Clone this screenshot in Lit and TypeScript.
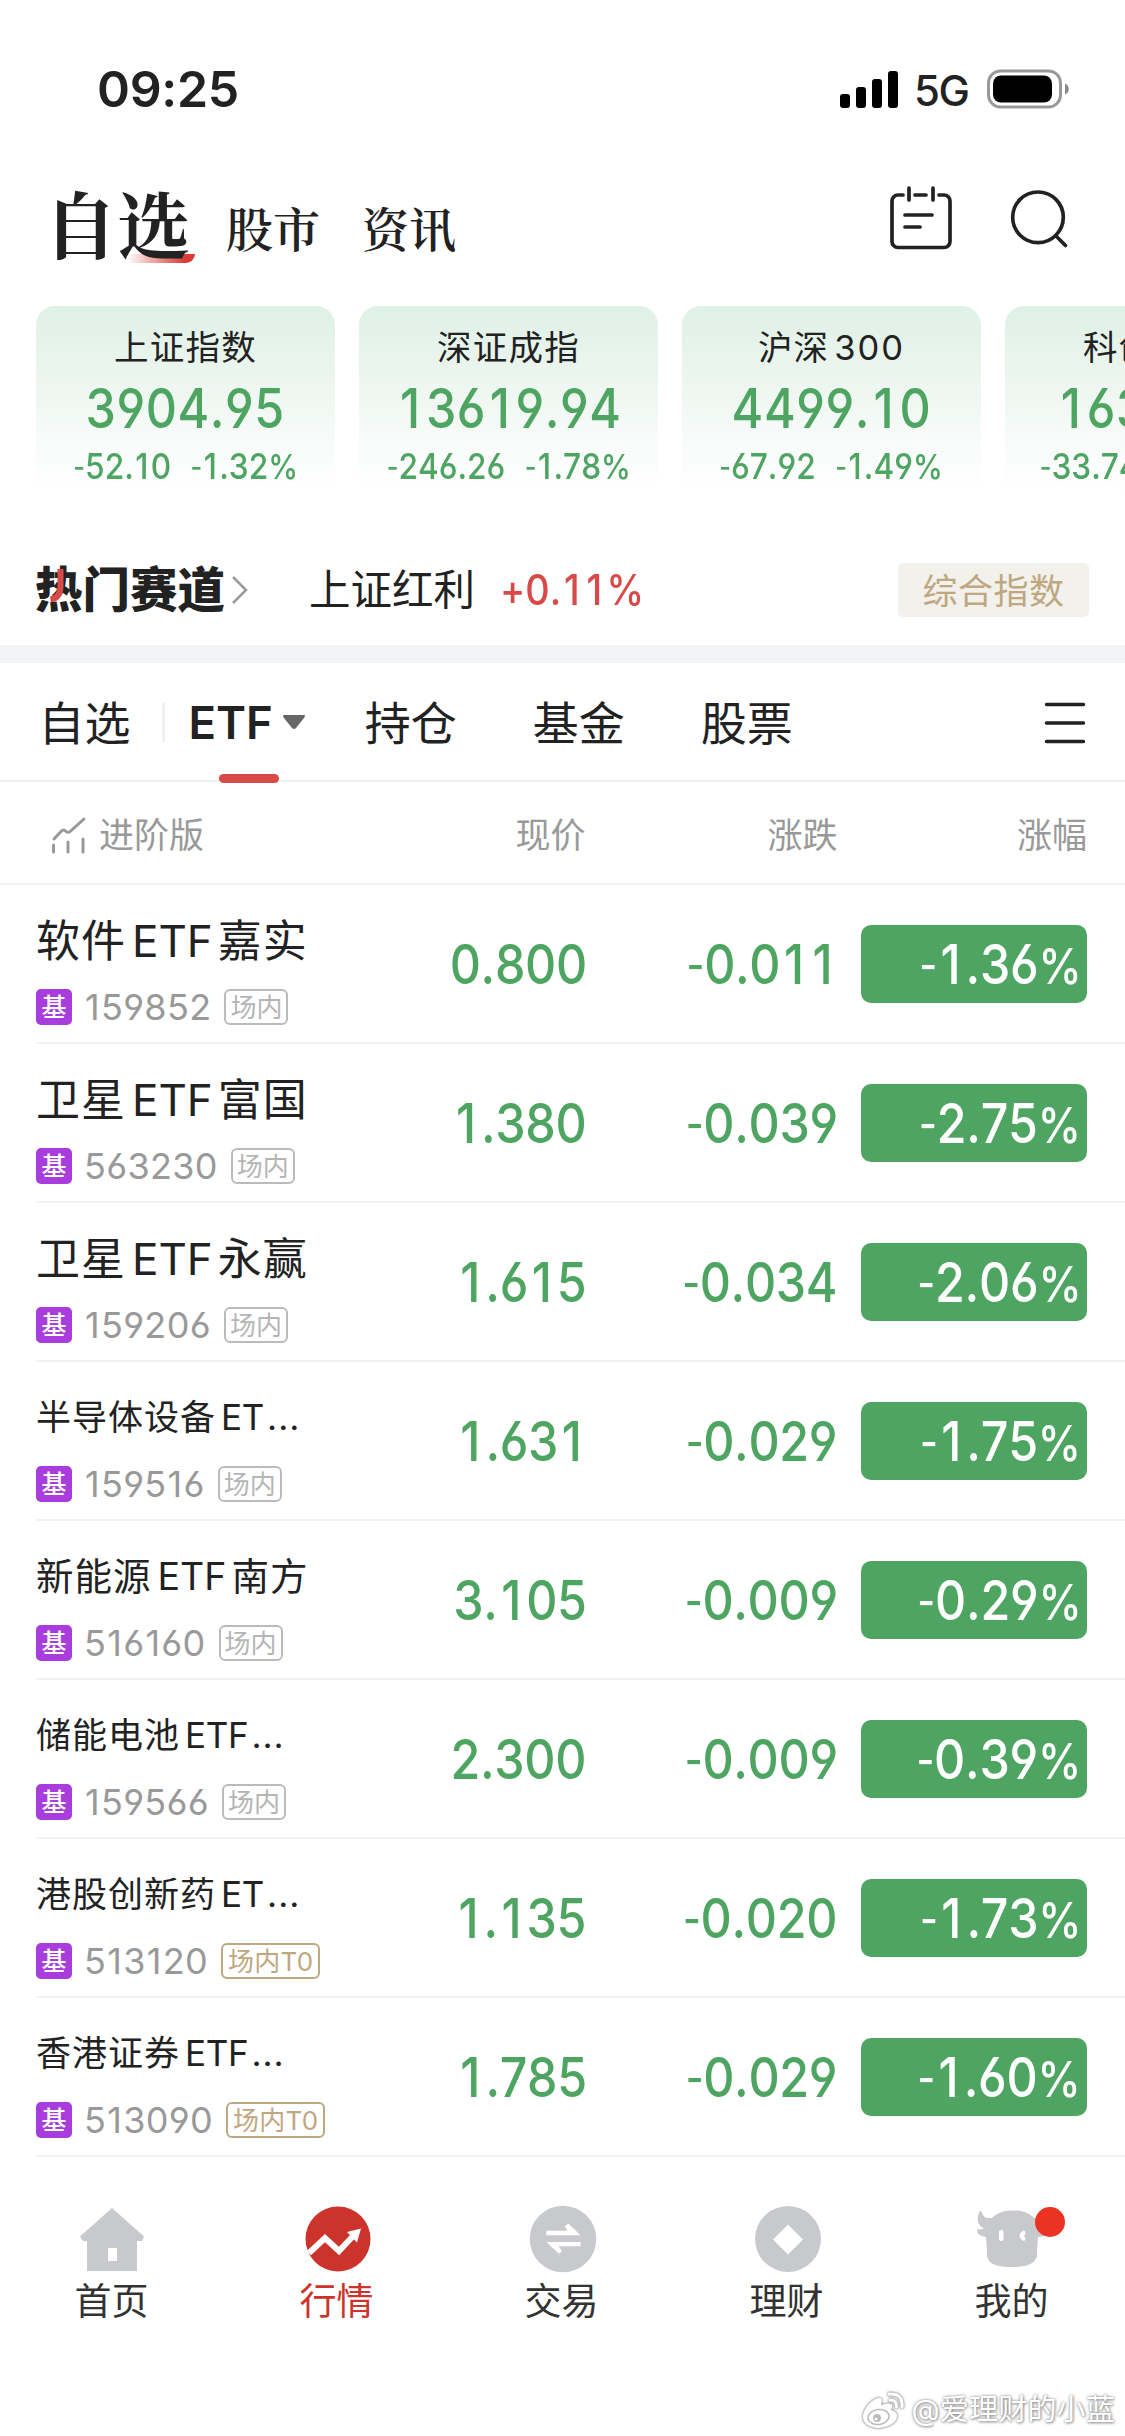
import { LitElement, html, svg, css, nothing } from "lit";
import { customElement, property } from "lit/decorators.js";

interface IndexCard { name: string; value: string; change: string; pct: string; }
interface Fund { name: string; size: string; code: string; t0?: boolean; price: string; change: string; pct: string; }

const INDICES: IndexCard[] = [
  { name: "上证指数", value: "3904.95", change: "-52.10", pct: "-1.32%" },
  { name: "深证成指", value: "13619.94", change: "-246.26", pct: "-1.78%" },
  { name: "沪深300", value: "4499.10", change: "-67.92", pct: "-1.49%" },
  { name: "科创综指", value: "1635.96", change: "-33.74", pct: "-2.02%" },
];

const FUNDS: Fund[] = [
  { name: "软件ETF嘉实", size: "lg", code: "159852", price: "0.800", change: "-0.011", pct: "-1.36%" },
  { name: "卫星ETF富国", size: "lg", code: "563230", price: "1.380", change: "-0.039", pct: "-2.75%" },
  { name: "卫星ETF永赢", size: "lg", code: "159206", price: "1.615", change: "-0.034", pct: "-2.06%" },
  { name: "半导体设备ET...", size: "sm", code: "159516", price: "1.631", change: "-0.029", pct: "-1.75%" },
  { name: "新能源ETF南方", size: "md", code: "516160", price: "3.105", change: "-0.009", pct: "-0.29%" },
  { name: "储能电池ETF...", size: "sm", code: "159566", price: "2.300", change: "-0.009", pct: "-0.39%" },
  { name: "港股创新药ET...", size: "sm", code: "513120", t0: true, price: "1.135", change: "-0.020", pct: "-1.73%" },
  { name: "香港证券ETF...", size: "sm", code: "513090", t0: true, price: "1.785", change: "-0.029", pct: "-1.60%" },
];

const shared = css`
  * { box-sizing: border-box; }
  .num {
    display: inline-block;
    white-space: nowrap;
    font-family: Inter, Roboto, sans-serif;
    font-feature-settings: "cv03", "cv04", "calt" 0;
    font-kerning: none;
    font-weight: 500;
    transform: scaleX(0.88);
  }
  .right { transform-origin: 100% 50%; }
  .left { transform-origin: 0 50%; }
  .pc { font-size: 0.9em; }
  .one { margin: 0 0.11em 0 0.075em; }
  .minus { font-size: 0.8em; line-height: 0; vertical-align: 0.06em; }
  svg { display: block; overflow: visible; }
`;

/* Splits a name so that Latin runs can carry their own side spacing. */
const mixed = (s: string) =>
  s.split(/([A-Za-z0-9]+)/).filter(Boolean).map((p) =>
    /^[A-Za-z0-9]/.test(p) ? html`<span class="latin">${p}</span>` : p);

const CLASSES: Record<string, string> = { "1": "one", "-": "minus", "%": "pc" };

/* Gives the narrow "1", the minus and the percent sign their own metrics. */
const figures = (s: string) =>
  s.split(/([1%-])/).filter(Boolean).map((p) =>
    CLASSES[p] ? html`<span class="${CLASSES[p]}">${p}</span>` : p);

@customElement("status-bar")
class StatusBar extends LitElement {
  static styles = [shared, css`
    :host { display: flex; align-items: center; justify-content: space-between; height: 178px; padding: 0 56px 0 97px; }
    .time { font: 600 50px/60px Inter, sans-serif; letter-spacing: -0.3px; }
    .side { display: flex; align-items: center; gap: 18px; }
    .net { font: 500 42px/50px Inter, sans-serif; width: 53px; letter-spacing: -1.5px; padding-top: 3px; margin: 0 2px 0 -2px; }
  `];
  render() {
    return html`
      <span class="time">09:25</span>
      <span class="side">
        <svg width="58" height="37" fill="#000">
          <rect x="0" y="23" width="10" height="14" rx="3"/><rect x="16" y="16" width="10" height="21" rx="3"/>
          <rect x="32" y="8" width="10" height="29" rx="3"/><rect x="48" y="0" width="10" height="37" rx="3"/>
        </svg>
        <span class="net">5G</span>
        <svg width="82" height="40">
          <rect x="1.5" y="2" width="72" height="36" rx="12" fill="none" stroke="#999" stroke-width="3"/>
          <rect x="6" y="6.500" width="59" height="27" rx="8"/>
          <path d="M78 14.500c5 2 5 9 0 11z" fill="#888"/>
        </svg>
      </span>`;
  }
}

@customElement("title-bar")
class TitleBar extends LitElement {
  static styles = [shared, css`
    :host { display: flex; align-items: center; height: 128px; padding: 0 58px 41px 44px; color: #222;
      font-family: "Noto Serif CJK SC", "Source Han Serif SC", "Noto Sans CJK SC", serif; }
    .main { position: relative; font-size: 73px; line-height: 82px; font-weight: 700; }
    .word { position: relative; }
    .swash { position: absolute; left: 83px; bottom: 0; width: 68px; height: 9px;
      background: linear-gradient(90deg, rgba(216,60,52,0), #d83c34 85%); border-radius: 0 0 9px 0; }
    .tab { font-size: 47px; line-height: 60px; font-weight: 600; padding-top: 10px; margin-left: 42px; }
    .first { margin-left: 36px; }
    .icons { margin-left: auto; display: flex; gap: 58px; align-self: flex-start; padding-top: 8px; }
  `];
  render() {
    return html`
      <div class="main"><span class="swash"></span><span class="word">自选</span></div>
      <div class="tab first">股市</div>
      <div class="tab">资讯</div>
      <div class="icons">
        <svg width="62" height="64" fill="none" stroke="#222" stroke-width="3.700" stroke-linecap="round">
          <path d="M13 9H8a6 6 0 0 0-6 6v40.500a6 6 0 0 0 6 6h46a6 6 0 0 0 6-6V15a6 6 0 0 0-6-6h-5M25 9h11M19 2v12M43 2v12M15 29h27M15 41h15"/>
        </svg>
        <svg width="57" height="64" fill="none" stroke="#222" stroke-width="3.700" stroke-linecap="round">
          <circle cx="28" cy="31.300" r="25.300"/><path d="M46.500 50.500l9 9"/>
        </svg>
      </div>`;
  }
}

@customElement("index-card")
class IndexCardEl extends LitElement {
  @property({ attribute: false }) data!: IndexCard;
  static styles = [shared, css`
    :host { flex: none; display: flex; flex-direction: column; align-items: center; width: 299px; height: 201px; padding-top: 19px;
      border-radius: 19px; background: linear-gradient(#dff1e6, #ebf5ee 33%, #f7fbf9 66%, #fff 92%); color: #4ea562; }
    .name { font: 400 34.500px/46px Inter, "Noto Sans CJK SC", sans-serif; color: #222; letter-spacing: 1.2px; white-space: nowrap; }
    .name .latin { margin-left: 5px; letter-spacing: 2px; }
    .value { font-size: 55px; line-height: 60px; margin-top: 7px; letter-spacing: 0.6px; }
    .sub { font-size: 36px; line-height: 46px; margin-top: 5px; }
    .gap { display: inline-block; width: 22px; }
    .pc { font-size: 0.95em; }
    .sub .one { margin: 0 0.07em 0 0.05em; }
  `];
  render() {
    const d = this.data;
    return html`
      <div class="name">${mixed(d.name)}</div>
      <div class="num value">${figures(d.value)}</div>
      <div class="num sub">${figures(d.change)}<span class="gap"></span>${figures(d.pct)}</div>`;
  }
}

@customElement("fund-row")
class FundRow extends LitElement {
  @property({ attribute: false }) data!: Fund;
  static styles = [shared, css`
    :host { display: grid; grid-template-columns: 326.500px 224px 251px 1fr; align-items: center; height: 159px; margin-left: 36px;
      padding-right: 38px; border-bottom: 2px solid #f2f2f2; color: #4ea562; }
    .info { display: flex; flex-direction: column; height: 157px; padding-top: 26px; }
    .name { height: 60px; line-height: 60px; color: #222; font-family: Inter, "Noto Sans CJK SC", sans-serif; white-space: nowrap; letter-spacing: 1px; }
    .lg { font-size: 44px; }
    .md { font-size: 37.500px; }
    .sm { font-size: 35px; line-height: 58px; }
    .latin { margin: 0 5px 0 6px; letter-spacing: 0; }
    .sm .latin { margin: 0 3px 0 5px; letter-spacing: -0.3px; }
    .meta { display: flex; align-items: center; height: 36px; margin-top: 18px; }
    .badge { width: 36px; height: 36px; border-radius: 5px; background: #a93cdc; color: #fff; text-align: center;
      font: 500 25px/36px Inter, "Noto Sans CJK SC", sans-serif; }
    .code { font: 400 36px/36px Inter, sans-serif; font-kerning: none; font-feature-settings: "cv03", "cv04"; color: #999;
      letter-spacing: 0.3px; margin: 0 13px 0 12px; }
    .code .one { margin: 0 1px; }
    .tag { height: 36px; border: 2px solid #bbb; border-radius: 6px; color: #b5b5b5; padding: 0 4px;
      font: 400 26px/33px Inter, "Noto Sans CJK SC", sans-serif; }
    .gold { border-color: #bfa781; color: #bfa781; padding: 0 5px; letter-spacing: 0.3px; }
    .cell { text-align: right; font-size: 55px; line-height: 60px; letter-spacing: -0.4px; }
    .pill { justify-self: end; width: 226px; height: 78px; border-radius: 10px; background: #4ea562; color: #fff; text-align: right;
      padding: 9px 6px 0 0; font-size: 55px; line-height: 60px; letter-spacing: -0.3px; }
  `];
  render() {
    const d = this.data;
    return html`
      <div class="info">
        <div class="name ${d.size}">${mixed(d.name)}</div>
        <div class="meta"><span class="badge">基</span><span class="code">${figures(d.code)}</span><span class="tag ${d.t0 ? "gold" : ""}">${d.t0 ? "场内T0" : "场内"}</span></div>
      </div>
      <div class="cell"><span class="num right">${figures(d.price)}</span></div>
      <div class="cell"><span class="num right">${figures(d.change)}</span></div>
      <div class="pill"><span class="num right">${figures(d.pct)}</span></div>`;
  }
}

const G = "#c8c9cd";
const NAV = [
  { label: "首页", icon: svg`<path d="M34 3L66 31.500 64 36H59V66H9V36H5L2 31.500z" fill="${G}"/><path d="M30 43h9v13h-9z" fill="#fff"/>` },
  { label: "行情", icon: svg`<circle cx="35" cy="34" r="32.500" fill="#cb332b"/><path d="M6 48L22 33 36 46 52 29" fill="none" stroke="#fff" stroke-width="6"/><path d="M44 27L58 23.500 54 37.500z" fill="#fff"/>` },
  { label: "交易", icon: svg`<circle cx="35" cy="34" r="33.300" fill="${G}"/><path d="M18.300 25.800H39.500L36.800 21.500 40.300 18.500 52.500 30.200H18.300zM52.500 37H18.300L31 48.700 34 46 30.500 41.300H52.500z" fill="#fff"/>` },
  { label: "理财", icon: svg`<circle cx="35" cy="34" r="33" fill="${G}"/><path d="M35 19.500L50 34.500 35 49.500 20 34.500z" fill="#fff"/>` },
  { label: "我的", dot: true, icon: svg`<path d="M3 6c3 0 2 7 8 7h4c5-5 11-7.500 21-7.500S52 8 57 13h8v10c5-1 8 1 5 5-2 3-6 4-9 4l-1 13c1 9-2 17-25 17S9 55 10 45L9 32C4 31 0 30 0 24c2 1 6 0 7-1C0 21-1 12 3 6z" fill="${G}"/><rect x="22" y="25" width="4.500" height="11" rx="2" fill="#fff"/><path d="M47 25.500c-6 2-6 8 0 10.500 2-1 2-3 0-5 2-2 2-4.500 0-5.500z" fill="#fff"/>` },
];

@customElement("bottom-nav")
class BottomNav extends LitElement {
  static styles = [shared, css`
    :host { display: grid; grid-template-columns: repeat(5, 225px); justify-content: center; height: 279px; padding: 48px 2px 0 0; background: #fff; }
    .item { display: flex; flex-direction: column; align-items: center; color: #333; font: 400 37px/51px Inter, "Noto Sans CJK SC", sans-serif; }
    .on { color: #cb332b; }
    .icon { position: relative; width: 68px; height: 71px; }
    .dotted svg { margin-left: -1px; }
    .dot { position: absolute; left: 57px; top: 2px; width: 30px; height: 30px; border-radius: 50%; background: #eb3323; }
  `];
  render() {
    return NAV.map((n, i) => html`
      <div class="item ${i === 1 ? "on" : ""}">
        <div class="icon ${n.dot ? "dotted" : ""}"><svg width="68" height="68" viewBox="0 0 68 68">${n.icon}</svg>${n.dot ? html`<span class="dot"></span>` : nothing}</div>
        <span>${n.label}</span>
      </div>`);
  }
}

@customElement("app-root")
class AppRoot extends LitElement {
  static styles = [shared, css`
    :host { display: block; position: relative; width: 1125px; height: 2436px; overflow: hidden; background: #fff; color: #222;
      font-family: Inter, "Noto Sans CJK SC", sans-serif; }
    .cards { display: flex; gap: 24px; height: 241px; padding-left: 36px; overflow: hidden; }
    .hot { display: flex; align-items: center; height: 98px; padding: 0 36px 12px 35px; }
    .brand { position: relative; font-size: 47.500px; line-height: 60px; font-weight: 900; }
    .accent { position: absolute; left: 15px; top: 9px; }
    .chev { margin-left: 8px; }
    .hotname { font-size: 41.500px; line-height: 62px; margin-left: 62px; }
    .up { color: #d84a48; font-size: 42px; line-height: 60px; margin-left: 25px; transform: scaleX(0.9); }
    .up .pc { font-size: 1em; }
    .chip { margin-left: auto; width: 191px; height: 54px; border-radius: 5px; background: #f3f1ec; color: #bfa781;
      font-size: 35px; line-height: 56px; letter-spacing: 0.5px; text-align: center; }
    .band { height: 18px; background: #f2f3f5; }
    .tabs { display: flex; align-items: center; height: 119px; padding: 2px 40px 0 38.500px; border-bottom: 2px solid #f0f0f0; font-size: 46px; line-height: 60px; }
    .sep { width: 3px; height: 39px; background: #f0f0f0; margin: 0 24px 0 31px; }
    .etf { position: relative; display: flex; align-items: center; gap: 10px; font-weight: 600; font-size: 45.500px; margin-right: 60px; }
    .bar { position: absolute; left: 30px; top: 81px; width: 60px; height: 9px; border-radius: 5px; background: #d84a48; }
    .t { margin-right: 76px; }
    .menu { margin-left: auto; }
    .head { display: grid; grid-template-columns: 326.500px 223px 252px 1fr; align-items: center; height: 103px; padding: 4px 38px 0 36px;
      border-bottom: 2px solid #f2f2f2; color: #999; font-size: 35px; line-height: 50px; text-align: right; }
    .adv { display: flex; align-items: center; gap: 13px; padding-left: 15px; }
    .mark { position: absolute; right: 10px; top: 2386px; display: flex; align-items: center; gap: 8px; color: #fff; font-size: 29px; line-height: 48px;
      text-shadow: 0 0 3px #888, 1px 1px 3px #999; }
    .mark span { letter-spacing: 0.2px; }
    .logo { filter: drop-shadow(0 0 1px #999) drop-shadow(0 0 1px #aaa); }
  `];
  render() {
    return html`
      <status-bar></status-bar>
      <title-bar></title-bar>
      <div class="cards">${INDICES.map((d) => html`<index-card .data=${d}></index-card>`)}</div>
      <div class="hot">
        <span class="brand">热门赛道<svg class="accent" width="12" height="34"><path d="M10.500 0V17Q10.500 29 0.500 30.500" fill="none" stroke="#d84a48" stroke-width="6"/></svg></span>
        <svg class="chev" width="14" height="28" fill="none" stroke="#999" stroke-width="2.500"><path d="M0 1L13 14 0 27"/></svg>
        <span class="hotname">上证红利</span>
        <span class="num left up">${figures("+0.11%")}</span>
        <span class="chip">综合指数</span>
      </div>
      <div class="band"></div>
      <div class="tabs">
        <span>自选</span><span class="sep"></span>
        <span class="etf">ETF<svg width="22" height="15"><path d="M1 0H21Q23 0 21 3L13 13Q11 15 9 13L1 3Q-1 0 1 0z" fill="#666"/></svg><span class="bar"></span></span>
        <span class="t">持仓</span><span class="t">基金</span><span>股票</span>
        <svg class="menu" width="40" height="42" stroke="#222" stroke-width="3.500" stroke-linecap="round"><path d="M1.500 2.500h37M1.500 21h37M1.500 39.500h37"/></svg>
      </div>
      <div class="head">
        <span class="adv"><svg width="35" height="36" fill="none" stroke="#999" stroke-width="3" stroke-linecap="round"><path d="M3 22L10.500 14q2-2 4 0t4 1L33 2M2.500 28v7M17 25v10M32 22v13"/></svg>进阶版</span>
        <span>现价</span><span>涨跌</span><span>涨幅</span>
      </div>
      ${FUNDS.map((d) => html`<fund-row .data=${d}></fund-row>`)}
      <bottom-nav></bottom-nav>
      <div class="mark">
        <svg class="logo" width="42" height="36" viewBox="0 0 42 36"><path d="M1 25C1 16 12 5 18 6q3 1 1 7 9-3 11 0 1 2-1 5 7 2 6 7c-1 7-12 11-19 11S1 32 1 25z" fill="#fff"/><ellipse cx="16.500" cy="25" rx="10.500" ry="7.500" fill="none" stroke="#bbb" stroke-width="1.500" transform="rotate(-8 16.500 25)"/><circle cx="15" cy="26" r="4" fill="#bbb"/><circle cx="14" cy="27" r="1.500" fill="#fff"/><path d="M27 2q14-1 13 13M28 8q7 0 6.500 7" fill="none" stroke="#fff" stroke-width="3" stroke-linecap="round"/></svg>
        <span>@爱理财的小蓝</span>
      </div>`;
  }
}
